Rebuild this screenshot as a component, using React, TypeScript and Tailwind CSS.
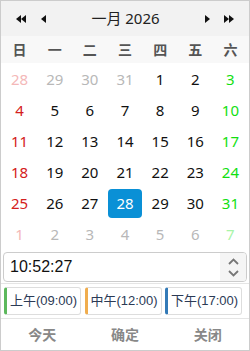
import React from "react"

const font = { fontFamily: '"Noto Sans", "Noto Sans CJK SC", sans-serif' }

type Day = { n: number; muted?: boolean }

const weeks: Day[][] = [
  [{ n: 28, muted: true }, { n: 29, muted: true }, { n: 30, muted: true }, { n: 31, muted: true }, { n: 1 }, { n: 2 }, { n: 3 }],
  [{ n: 4 }, { n: 5 }, { n: 6 }, { n: 7 }, { n: 8 }, { n: 9 }, { n: 10 }],
  [{ n: 11 }, { n: 12 }, { n: 13 }, { n: 14 }, { n: 15 }, { n: 16 }, { n: 17 }],
  [{ n: 18 }, { n: 19 }, { n: 20 }, { n: 21 }, { n: 22 }, { n: 23 }, { n: 24 }],
  [{ n: 25 }, { n: 26 }, { n: 27 }, { n: 28 }, { n: 29 }, { n: 30 }, { n: 31 }],
  [{ n: 1, muted: true }, { n: 2, muted: true }, { n: 3, muted: true }, { n: 4, muted: true }, { n: 5, muted: true }, { n: 6, muted: true }, { n: 7, muted: true }],
]

function Tri({ dir }: { dir: "l" | "r" }) {
  return (
    <svg width="5" height="8" viewBox="0 0 5 8">
      {dir === "l" ? <path d="M5 0V8L0 4Z" fill="#111" /> : <path d="M0 0V8L5 4Z" fill="#111" />}
    </svg>
  )
}

function dayClass(col: number, muted?: boolean) {
  if (col === 0) return muted ? "text-[#f4b8b8]" : "text-[#d42020]"
  if (col === 6) return muted ? "text-[#a8f5a8]" : "text-[#11e011]"
  return muted ? "text-[#b8b8b8]" : "text-[#111]"
}

export default function App() {
  return (
    <div style={font} className="flex h-[351px] w-[250px] flex-col border border-[#cccccc] bg-white">
      {/* Header */}
      <div className="flex h-[35px] items-center bg-[#f2f2f2] px-[15px]">
        <div className="flex items-center">
          <Tri dir="l" />
          <Tri dir="l" />
        </div>
        <div className="ml-[15px]">
          <Tri dir="l" />
        </div>
        <div className="flex-1 text-center text-[15px] text-[#222]">一月 2026</div>
        <div className="mr-[14px]">
          <Tri dir="r" />
        </div>
        <div className="flex items-center">
          <Tri dir="r" />
          <Tri dir="r" />
        </div>
      </div>

      {/* Weekdays */}
      <div className="grid h-[27px] grid-cols-7 items-center bg-[#f8f8f8] px-[1px] text-[14px] font-bold text-[#555]">
        {["日", "一", "二", "三", "四", "五", "六"].map((w) => (
          <div key={w} className="text-center">{w}</div>
        ))}
      </div>

      {/* Days */}
      <div className="px-[1px] pt-[1px]">
        {weeks.map((week, r) => (
          <div key={r} className="grid h-[31px] grid-cols-7">
            {week.map((d, c) => {
              const sel = r === 4 && c === 3
              return (
                <div key={c} className="flex items-center justify-center p-[1px]">
                  <div
                    className={
                      sel
                        ? "flex h-full w-full items-center justify-center rounded-[4px] bg-[#0a90d6] text-[15px] text-white"
                        : `flex h-full w-full items-center justify-center text-[15px] ${dayClass(c, d.muted)}`
                    }
                  >
                    {d.n}
                  </div>
                </div>
              )
            })}
          </div>
        ))}
      </div>

      {/* Time */}
      <div className="border-b border-[#e5e5e5] px-[2px] pb-[1px] pt-[2px]">
        <div className="flex h-[30px] overflow-hidden rounded-[4px] border border-[#cccccc]">
          <div className="flex flex-1 items-center pl-[6px] font-['Liberation_Sans'] text-[16px] text-[#111]">10:52:27</div>
          <div className="flex w-[26px] flex-col items-center justify-center gap-[5px] bg-[#f5f5f5]">
            <svg width="11" height="7" viewBox="0 0 11 7">
              <path d="M1 6L5.5 1.5L10 6" fill="none" stroke="#777" strokeWidth="1.8" />
            </svg>
            <svg width="11" height="7" viewBox="0 0 11 7">
              <path d="M1 1L5.5 5.5L10 1" fill="none" stroke="#777" strokeWidth="1.8" />
            </svg>
          </div>
        </div>
      </div>

      {/* Shortcuts */}
      <div className="flex gap-[3.5px] border-b border-[#e5e5e5] px-[3px] py-[3px]">
        {[
          ["上午(09:00)", "border-l-[#5cb85c]"],
          ["中午(12:00)", "border-l-[#f0ad4e]"],
          ["下午(17:00)", "border-l-[#337ab7]"],
        ].map(([t, c]) => (
          <div
            key={t}
            className={`flex h-[28px] w-[77px] items-center justify-center rounded-[3px] border border-l-[3px] border-[#dddddd] font-['Liberation_Sans','Noto_Sans_CJK_SC',sans-serif] text-[13px] text-[#2b3a55] ${c}`}
          >
            {t}
          </div>
        ))}
      </div>

      {/* Footer */}
      <div className="grid flex-1 grid-cols-3 items-center text-[14px] font-bold text-[#888]">
        <div className="text-center">今天</div>
        <div className="text-center">确定</div>
        <div className="text-center">关闭</div>
      </div>
    </div>
  )
}
